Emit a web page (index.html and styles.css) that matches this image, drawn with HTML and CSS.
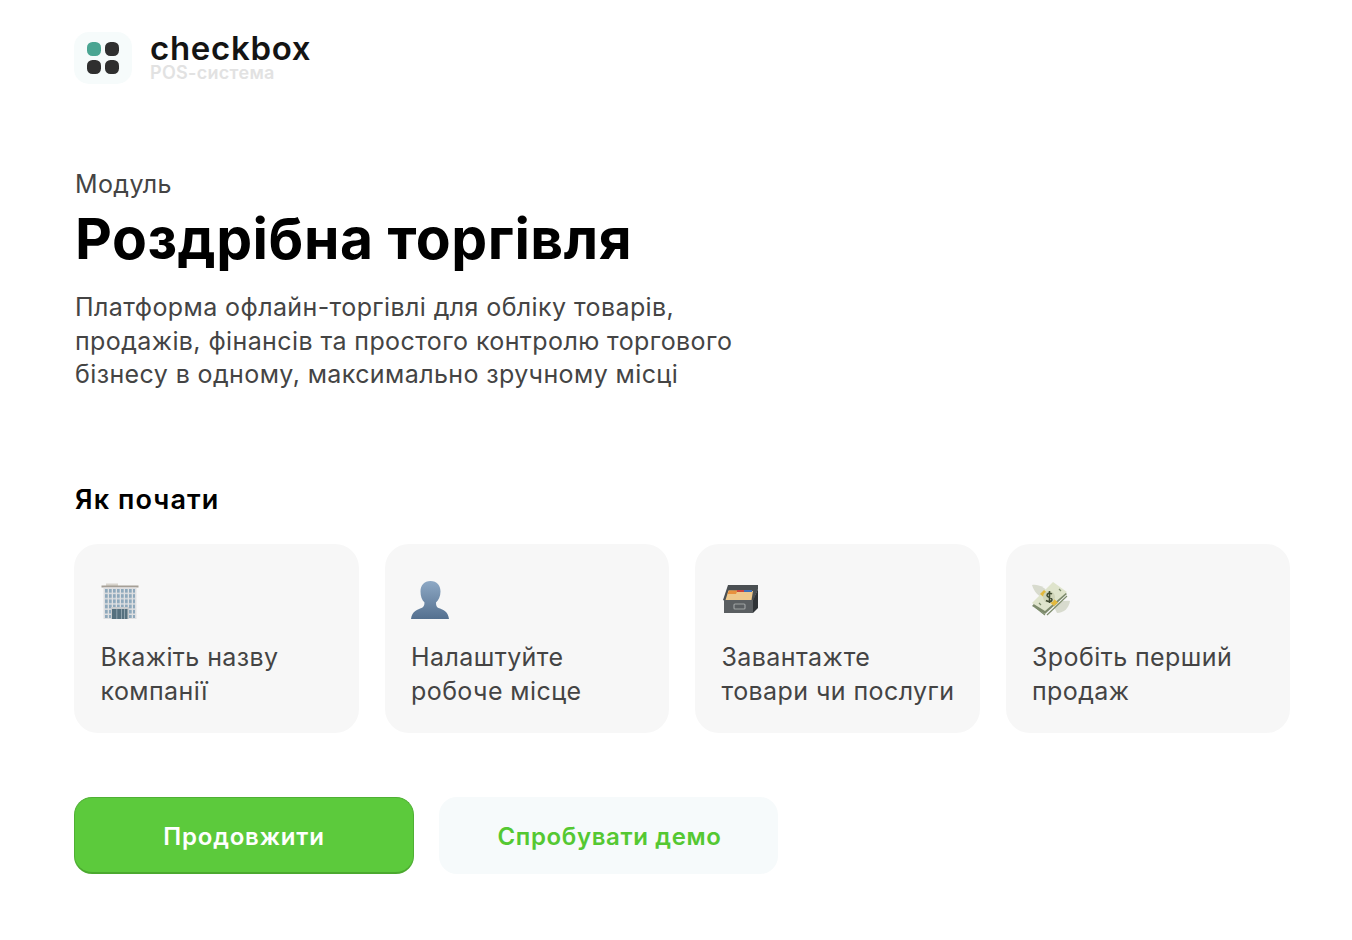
FILE: index.html
```html
<!DOCTYPE html>
<html lang="uk">
<head>
<meta charset="utf-8">
<title>Checkbox</title>
<link rel="stylesheet" href="styles.css">
</head>
<body>
<main class="page">
  <header class="brand">
    <svg class="logo" viewBox="0 0 58 52" width="58" height="52">
      <rect width="58" height="52" rx="15" fill="#f6fbfb"/>
      <rect x="13" y="10" width="14" height="14" rx="5.500" fill="#4aa592"/>
      <rect x="31" y="10" width="14" height="14" rx="5.500" fill="#2f2f2f"/>
      <rect x="13" y="28" width="14" height="14" rx="5.500" fill="#2f2f2f"/>
      <rect x="31" y="28" width="14" height="14" rx="5.500" fill="#2f2f2f"/>
    </svg>
    <div class="brand-text">
      <div class="brand-name">checkbox</div>
      <div class="brand-sub">POS-система</div>
    </div>
  </header>

  <section class="intro">
    <div class="eyebrow">Модуль</div>
    <h1 class="title">Роздрібна торгівля</h1>
    <p class="lead">Платформа офлайн-торгівлі для обліку товарів,<br>продажів, фінансів та простого контролю торгового<br>бізнесу в одному, максимально зручному місці</p>
  </section>

  <h2 class="subtitle">Як почати</h2>

  <section class="cards">
    <article class="card">
      <svg class="emoji" viewBox="0 0 40 40" width="40" height="40">
        <defs>
          <pattern id="win" x="4" y="9" width="4" height="5.200" patternUnits="userSpaceOnUse">
            <rect width="2.700" height="3.800" fill="#8fa9bc"/>
          </pattern>
        </defs>
        <rect x="5" y="3.500" width="12" height="2.500" fill="#d8d4cd"/>
        <rect x="0.500" y="5.500" width="37" height="2" fill="#a59f96"/>
        <rect x="2.500" y="7.500" width="33" height="31.500" fill="#dfe0e2"/>
        <rect x="4" y="9" width="30" height="29" fill="url(#win)"/>
        <rect x="10" y="27" width="18" height="12" fill="#c9ccce"/>
        <rect x="11" y="29" width="15.500" height="10" fill="#55707e"/>
        <path d="M15.800 29v10M20.500 29v10M23.500 29v10" stroke="#9fb0ba" stroke-width=".8"/>
      </svg>
      <div class="card-text">Вкажіть назву<br>компанії</div>
    </article>
    <article class="card">
      <svg class="emoji" viewBox="0 0 40 40" width="40" height="40">
        <defs>
          <linearGradient id="bust" x1="0" y1="0" x2="0" y2="1">
            <stop offset="0" stop-color="#8ea9c5"/>
            <stop offset="1" stop-color="#54708f"/>
          </linearGradient>
        </defs>
        <path d="M19.500 1c6.500 0 10 4.500 10 10.500 0 5-2 8.500-4.500 11 0 3 .5 4.500 2.500 5.500 4 1.500 9.500 2.500 10.500 11H0c1-8.500 7-9.500 10.500-11 2-1 3-2.500 3-5.500C11 20 9.500 16.500 9.500 11.500 9.500 5.500 13 1 19.500 1z" fill="url(#bust)"/>
      </svg>
      <div class="card-text">Налаштуйте<br>робоче місце</div>
    </article>
    <article class="card">
      <svg class="emoji" viewBox="0 0 40 40" width="40" height="40">
        <path d="M1 20 6 5h30v4l-5 12H3z" fill="#4a4f52"/>
        <path d="M3.500 20 6.500 10.500l24.500 .5-1.500 9z" fill="#eec88c"/>
        <path d="M5.500 14l1.500-3.500h8.500L14 14z" fill="#e8913e"/>
        <rect x="15" y="10" width="7" height="2" fill="#c9453f"/>
        <rect x="22" y="10" width="8" height="2" fill="#3e6fb8"/>
        <rect x="2" y="20" width="29" height="13" fill="#5a5e61"/>
        <path d="M31 20l5-11v19l-5 5z" fill="#2f3336"/>
        <rect x="12" y="24" width="11" height="5" rx="1" fill="none" stroke="#9da1a2" stroke-width="1.200"/>
      </svg>
      <div class="card-text">Завантажте<br>товари чи послуги</div>
    </article>
    <article class="card">
      <svg class="emoji" viewBox="0 0 40 40" width="40" height="40">
        <path d="M0 5c5-1 11 1 15 6l-3 7C7 17 2 12 0 5z" fill="#d8dbce"/>
        <path d="M38 21c-1 7-6 12-13 12l-4-8c5-3 11-5 17-4z" fill="#d8dbce"/>
        <path d="M0 26 21 3l14 11-22 20z" fill="#7d8a6c"/>
        <path d="M0 23 21 2l14 10-22 19z" fill="#dfe4cc"/>
        <path d="M8 14l14 12 4-3.500L12 10z" fill="#e3b93e"/>
        <circle cx="17" cy="17" r="6" fill="#cfd4b8"/>
        <path d="M20 14c-2-1.500-5-1-5 1.500s5 1.500 5 4-3.500 2.500-6 1M17.500 11v12" fill="none" stroke="#3f4a30" stroke-width="1.500"/>
        <path d="M27 9l2 2M7 23l2 2M3 27l10 8M35 16 15 35" stroke="#7d8c6c" stroke-width="1.200" fill="none"/>
      </svg>
      <div class="card-text">Зробіть перший<br>продаж</div>
    </article>
  </section>

  <div class="actions">
    <button class="btn btn-primary" type="button">Продовжити</button>
    <button class="btn btn-secondary" type="button">Спробувати демо</button>
  </div>
</main>
</body>
</html>
```
FILE: styles.css
```css
* { box-sizing: border-box; }
html, body { margin: 0; padding: 0; background: #fff; }
body {
  font-family: "Inter", "Noto Sans", sans-serif;
  color: #3d3d3d;
}
.page {
  width: 1352px;
  height: 940px;
  padding: 32px 62px 0 74px;
  overflow: hidden;
}
.brand { display: flex; align-items: flex-start; gap: 18px; height: 53px; }
.logo { display: block; }
.brand-name {
  margin-top: 1px;
  font-size: 33px;
  font-weight: 600;
  line-height: 30px;
  color: #141414;
  letter-spacing: 0.7px;
}
.brand-sub {
  font-size: 18px;
  font-weight: 600;
  line-height: 20px;
  color: #e2e2e2;
  letter-spacing: 0.3px;
}
.intro { margin-top: 84px; }
.eyebrow { font-size: 25px; line-height: 30px; color: #444; padding-left: 1px; letter-spacing: 0.4px; }
.title {
  margin: 6px 0 0 1px;
  font-size: 57px;
  line-height: 68px;
  font-weight: 700;
  color: #000;
  letter-spacing: 0.520px;
}
.lead {
  margin: 18px 0 0 1px;
  font-size: 25px;
  line-height: 33.500px;
  color: #444;
  letter-spacing: 0.400px;
}
.subtitle {
  margin: 92px 0 0 1px;
  font-size: 27px;
  line-height: 32px;
  font-weight: 600;
  color: #000;
  letter-spacing: 1.100px;
}
.cards {
  margin-top: 28px;
  display: grid;
  grid-template-columns: repeat(4, 1fr);
  column-gap: 26px;
}
.card {
  height: 189px;
  background: #f7f7f7;
  border-radius: 24px;
  padding: 36px 20px 0 26.500px;
}
.emoji { display: block; margin-bottom: 20px; }
.card-text { font-size: 25px; line-height: 34px; color: #444; letter-spacing: 0.420px; white-space: nowrap; }
.actions { display: flex; gap: 25px; margin-top: 64px; }
.btn {
  width: 340px;
  height: 77px;
  border-radius: 18px;
  font-family: inherit;
  font-size: 24px;
  font-weight: 600;
  letter-spacing: 0.800px;
}
.btn-primary {
  padding-top: 4px;
  background: #5cca3c;
  color: #fff;
  border: 1px solid #4fb034;
  border-bottom: 2px solid #4ba92f;
}
.btn-secondary {
  width: 339px;
  padding: 3px 0 0 2px;
  background: #f6fafb;
  color: #54c832;
  border: 0;
  letter-spacing: 0.650px;
}
```
